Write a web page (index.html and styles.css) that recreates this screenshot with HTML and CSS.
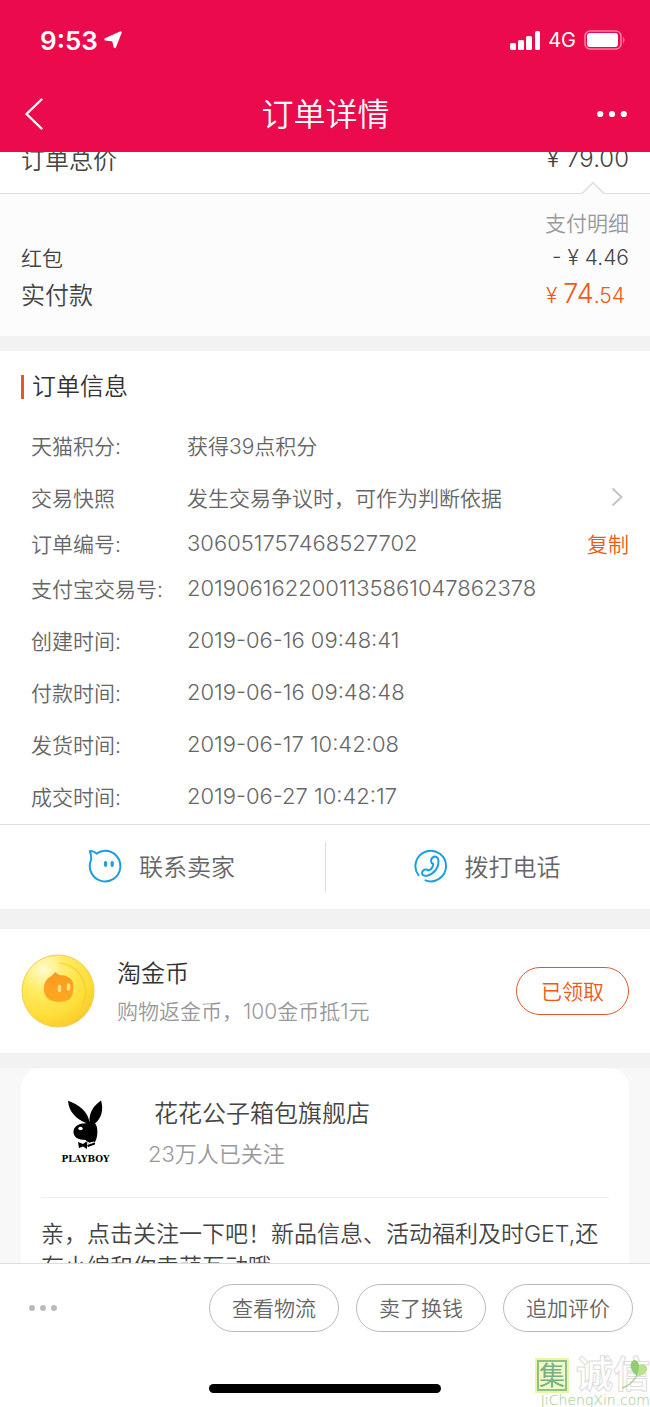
FILE: index.html
```html
<!DOCTYPE html>
<html lang="zh-CN">
<head>
<meta charset="utf-8">
<meta name="viewport" content="width=device-width, initial-scale=1">
<title>订单详情</title>
<link rel="stylesheet" href="styles.css">
</head>
<body>
<div class="app">
  <header class="header">
    <div class="status">
      <div class="status-group">
        <span class="clock">9:53</span>
        <svg class="locate" width="18" height="18" viewBox="0 0 18 18"><path d="M16.500 1.500 10.800 16 9.300 9.200 1.500 8.300Z" fill="#fff" stroke="#fff" stroke-width="2.400" stroke-linejoin="round"/></svg>
      </div>
      <div class="status-group">
        <svg width="30" height="19" viewBox="0 0 30 19" fill="#fff"><rect x="0" y="12" width="6" height="7" rx="1.500"/><rect x="8" y="9" width="6" height="10" rx="1.500"/><rect x="16" y="5" width="6" height="14" rx="1.500"/><rect x="25" y="0" width="5" height="19" rx="1.500"/></svg>
        <span class="network">4G</span>
        <svg width="42" height="20" viewBox="0 0 42 20"><rect x="1" y="1" width="36" height="18" rx="5" fill="none" stroke="#fff" stroke-opacity=".5" stroke-width="1.500"/><rect x="3" y="3" width="31" height="14" rx="3" fill="#fff"/><path d="M39 6.500q3 3.500 0 7Z" fill="#fff" fill-opacity=".5"/></svg>
      </div>
    </div>
    <nav class="nav">
      <button class="icon-button" aria-label="返回"><svg width="20" height="32" viewBox="0 0 20 32"><path d="M17.500 1.500 2.500 16l15 14.500" fill="none" stroke="#fff" stroke-width="2.400" stroke-linecap="round" stroke-linejoin="round"/></svg></button>
      <h1 class="nav-title">订单详情</h1>
      <button class="icon-button icon-button-end" aria-label="更多"><svg width="30" height="8" viewBox="0 0 30 8" fill="#fff"><circle cx="3.200" cy="4" r="3.100"/><circle cx="15" cy="4" r="3.100"/><circle cx="26.800" cy="4" r="3.100"/></svg></button>
    </nav>
  </header>

  <main class="content">
    <section class="total">
      <span>订单总价</span>
      <span>¥ 79.00</span>
      <svg class="notch" width="24" height="13" viewBox="0 0 24 13"><path d="M0 13 1.500 12 12 1.500 22.500 12 24 13Z" fill="#fcfcfc"/><path d="M1 12.500 12 1.500l11 11" fill="none" stroke="#ddd" stroke-width="1.500"/></svg>
    </section>

    <section class="payment">
      <p class="payment-detail">支付明细</p>
      <div class="payment-row"><span>红包</span><span>- ¥ 4.46</span></div>
      <div class="payment-row payment-paid"><span>实付款</span><span class="paid"><span class="paid-small">¥ </span>74<span class="paid-small">.54</span></span></div>
    </section>

    <section class="order">
      <h2 class="order-title">订单信息</h2>
      <dl class="info">
        <div class="info-row"><dt>天猫积分:</dt><dd>获得39点积分</dd></div>
        <div class="info-row"><dt>交易快照</dt><dd>发生交易争议时，可作为判断依据</dd>
          <svg class="chevron" width="13" height="20" viewBox="0 0 13 20"><path d="m1.500 1.500 9 8.500-9 8.500" fill="none" stroke="#c4c4c4" stroke-width="2"/></svg></div>
        <div class="info-row info-row-short"><dt>订单编号:</dt><dd class="digits">306051757468527702</dd><button class="copy">复制</button></div>
        <div class="info-row"><dt>支付宝交易号:</dt><dd class="digits">2019061622001135861047862378</dd></div>
        <div class="info-row"><dt>创建时间:</dt><dd class="digits">2019-06-16 09:48:41</dd></div>
        <div class="info-row"><dt>付款时间:</dt><dd class="digits">2019-06-16 09:48:48</dd></div>
        <div class="info-row"><dt>发货时间:</dt><dd class="digits">2019-06-17 10:42:08</dd></div>
        <div class="info-row"><dt>成交时间:</dt><dd class="digits">2019-06-27 10:42:17</dd></div>
      </dl>
    </section>

    <section class="contact">
      <button class="contact-button">
        <svg width="34" height="34" viewBox="0 0 34 34" fill="none" stroke="#1b9fe0" stroke-width="2" stroke-linecap="round" stroke-linejoin="round"><path d="M3.200 10.800Q3.500 5.800 1.800 2.200q3.200-.6 6.800 2.400Q12.600 1.800 17 1.800a15.300 15.300 0 1 1-14 9.300"/><path d="M17.600 13.500v2.800M24.200 13.500v2.800" stroke-width="3.200"/></svg>
        <span>联系卖家</span>
      </button>
      <button class="contact-button">
        <svg width="34" height="34" viewBox="0 0 34 34" fill="none" stroke="#1b9fe0" stroke-width="2" stroke-linecap="round" stroke-linejoin="round"><path d="M4.500 26.200A15.300 15.300 0 1 1 11.500 31.400"/><path d="M18.500 8.600c2.600-2 5.600-.7 5.900 2.600.6 7.800-4.300 13.700-11.300 15.500-3.400.6-5.900-1.400-4.800-4 1.100-2.300 4-3 5.900-1.200 3.200-1 4.800-3.500 5-6.600-2.500-.7-3-4.500-.7-6.300Z"/></svg>
        <span>拨打电话</span>
      </button>
    </section>

    <section class="coin">
      <svg class="coin-icon" width="74" height="74" viewBox="0 0 74 74">
        <defs><radialGradient id="gold" cx=".3" cy=".2" r=".9"><stop offset="0" stop-color="#fffbd0"/><stop offset=".35" stop-color="#ffec62"/><stop offset=".75" stop-color="#fddc35"/><stop offset="1" stop-color="#f8c52c"/></radialGradient>
        <linearGradient id="face" x2="0" y2="1"><stop stop-color="#f99a20"/><stop offset="1" stop-color="#ffa822"/></linearGradient></defs>
        <circle cx="37" cy="37" r="36" fill="url(#gold)" stroke="#f3cc51" stroke-width="1"/>
        <path d="M38 9A29 29 0 0 1 62 50" fill="none" stroke="#f8c331" stroke-width="1.500" opacity=".6"/>
        <path d="M31 21.500q3.500-4 4-3.500.5 2 4.500 3.300 5-.6 7.500 1.700 5.200 2.300 5.200 8.500 1 8-3.200 13.500-5 3-12 3Q23.600 47 22.800 36 22 26 31 21.500Z" fill="url(#face)"/>
        <path d="M38.500 32.500v4M47.500 31v4" stroke="#ffe078" stroke-width="3.500" stroke-linecap="round"/>
      </svg>
      <div class="coin-text">
        <h3 class="coin-title">淘金币</h3>
        <p class="coin-note">购物返金币，100金币抵1元</p>
      </div>
      <button class="pill pill-accent">已领取</button>
    </section>

    <section class="shop">
      <article class="card">
        <div class="shop-head">
          <div class="logo">
            <svg width="38" height="49" viewBox="0 0 38 49"><path d="M1 .800C11 4 21.500 12 22.500 22.500 22 13 26 6 34 .5 37 10 34 19 28 23.500 31 26 31 35 29 40q-1.500 4-9.500 3l-.7-3C11 40 6.500 37 6.500 32c0-6 6-9 13-8.700C9 19 2 12 1 .800Z" fill="#000"/><ellipse cx="13.500" cy="28.500" rx="2.200" ry="1.700" fill="#fff"/><path d="m11 42 5 2 4-3v8l-4-2.500-4 1.500ZM20 45l8-2.500v2l-7 2.500Z" fill="#000"/><path d="M19 41.500q3 3 8 .5" fill="none" stroke="#fff"/></svg>
            <span class="logo-name">PLAYBOY</span>
          </div>
          <div class="shop-text">
            <h3 class="shop-name">花花公子箱包旗舰店</h3>
            <p class="followers">23万人已关注</p>
          </div>
        </div>
        <p class="message">亲，点击关注一下吧！新品信息、活动福利及时GET,还有小编和你卖萌互动哦</p>
      </article>
    </section>
  </main>

  <footer class="footer">
    <div class="actions">
      <button class="icon-button more" aria-label="更多操作"><svg width="30" height="8" viewBox="0 0 30 8" fill="#bbb"><circle cx="4" cy="4" r="3"/><circle cx="15" cy="4" r="3"/><circle cx="26" cy="4" r="3"/></svg></button>
      <button class="pill">查看物流</button>
      <button class="pill">卖了换钱</button>
      <button class="pill">追加评价</button>
    </div>
    <div class="home-bar"></div>
    <div class="brand">
      <div class="brand-top">
        <span class="seal">集</span>
        <span class="brand-name">诚信</span>
        <svg class="leaf" width="30" height="32" viewBox="0 0 30 32"><path d="M2 30Q12 27 17 17" fill="none" stroke="#a9d58d" stroke-width="1.500"/><path d="M17 18C9 12 9 4 14 2q4 0 5 5 6-2 8 3 0 7-10 8Z" fill="#92cc73"/><path d="M17 18Q19 11 19 7q6-2 8 3 0 7-10 8Z" fill="#bce18e"/></svg>
      </div>
      <span class="brand-url">JiChengXin.com</span>
    </div>
  </footer>
</div>
</body>
</html>
```
FILE: styles.css
```css
* {
  box-sizing: border-box;
}

body,
h1,
h2,
h3,
p,
dl,
dd {
  margin: 0;
  font-weight: 350;
}

body {
  color: #444;
  font-family: Inter, "Noto Sans CJK SC", sans-serif;
  font-size: 21px;
}

button {
  padding: 0;
  border: 0;
  background: none;
  color: inherit;
  font: inherit;
}

svg {
  display: block;
  flex: none;
}

.app {
  display: flex;
  flex-direction: column;
  height: 100vh;
  background: #fff;
}

.header {
  position: relative;
  z-index: 1;
  flex: none;
  background: #eb0a4b;
  color: #fff;
}

.status {
  display: flex;
  align-items: center;
  justify-content: space-between;
  height: 76px;
  padding: 4px 24px 0 40px;
}

.status-group {
  display: flex;
  align-items: center;
  gap: 8px;
}

.clock {
  font-size: 26px;
  font-weight: 600;
}

.locate {
  margin-left: -2px;
}

.network {
  font-size: 20px;
  font-weight: 400;
}

.nav {
  display: grid;
  grid-template-columns: 1fr auto 1fr;
  align-items: center;
  height: 76px;
  padding: 0 23px 0 24px;
}

.nav-title {
  padding-top: 2px;
  font-size: 32px;
  line-height: 40px;
}

.icon-button-end {
  justify-self: end;
}

.content {
  flex: 1;
  min-height: 0;
  overflow: hidden;
}

.total {
  position: relative;
  display: flex;
  align-items: center;
  justify-content: space-between;
  height: 72px;
  margin-top: -30px;
  padding: 2px 21px 0;
  border-bottom: 1px solid #ddd;
  font-size: 24px;
}

.notch {
  position: absolute;
  right: 45px;
  bottom: -1px;
}

.payment {
  height: 142px;
  padding: 15px 21px 0;
  background: #fcfcfc;
}

.payment-detail {
  color: #999;
  line-height: 30px;
  text-align: right;
}

.payment-row {
  display: flex;
  align-items: center;
  justify-content: space-between;
  height: 36px;
}

.payment-paid {
  padding-right: 4px;
  font-size: 24px;
}

.paid {
  color: #ee5a14;
  font-size: 27px;
}

.paid-small {
  font-size: 21px;
}

.order {
  padding: 24px 21px 0;
  border-top: 15px solid #f2f2f2;
}

.order-title {
  padding-left: 8px;
  border-left: 3px solid #e0592a;
  color: #333;
  font-size: 24px;
  line-height: 24px;
}

.info {
  padding: 20px 0 2px 10px;
  color: #666;
}

.info-row {
  display: flex;
  align-items: center;
  height: 52px;
}

.info-row-short {
  height: 39px;
}

.info-row dt {
  flex: none;
  width: 156px;
}

.info-row dd {
  flex: 1;
}

.info-row .digits {
  font-size: 22px;
}

.chevron {
  margin-right: 5px;
}

.copy {
  color: #ee5a14;
}

.contact {
  display: grid;
  grid-template-columns: 1fr 1fr;
  height: 105px;
  padding: 17px 0;
  border-top: 1px solid #ddd;
  border-bottom: 20px solid #f2f2f2;
}

.contact-button {
  display: flex;
  align-items: center;
  justify-content: center;
  gap: 17px;
  padding: 0 2px 3px 0;
  color: #666;
  font-size: 24px;
}

.contact-button + .contact-button {
  border-left: 1px solid #ddd;
}

.coin {
  display: flex;
  align-items: center;
  gap: 22px;
  height: 139px;
  padding: 0 21px;
  border-bottom: 15px solid #f2f2f2;
}

.coin-text {
  flex: 1;
  padding-top: 3px;
}

.coin-title {
  color: #333;
  font-size: 24px;
  line-height: 38px;
}

.coin-note {
  color: #999;
  line-height: 38px;
}

.pill {
  width: 130px;
  height: 48px;
  padding-bottom: 2px;
  border: 1px solid #bbb;
  border-radius: 24px;
  background: #fff;
  color: #666;
}

.pill-accent {
  width: 113px;
  border-color: #e0592a;
  color: #ee5a14;
}

.shop {
  padding: 0 21px;
  background: #f8f8f8;
}

.card {
  padding: 0 20px 40px;
  border-radius: 20px 20px 0 0;
  background: #fff;
}

.shop-head {
  display: flex;
  align-items: center;
  gap: 38px;
  height: 130px;
  padding-left: 20px;
  border-bottom: 1px solid #eee;
}

.logo {
  display: flex;
  flex-direction: column;
  align-items: center;
  gap: 4px;
  width: 49px;
}

.logo-name {
  color: #000;
  font-family: "DejaVu Serif", serif;
  font-size: 9px;
  font-weight: 700;
  line-height: 12px;
}

.shop-text {
  padding-top: 2px;
}

.shop-name {
  padding-left: 6px;
  font-size: 24px;
  line-height: 40px;
}

.followers {
  color: #999;
  font-size: 22px;
  line-height: 40px;
}

.message {
  padding-top: 20px;
  font-size: 23px;
  line-height: 33px;
}

.footer {
  position: relative;
  flex: none;
  height: 144px;
  border-top: 1px solid #ddd;
  background: #fff;
}

.actions {
  display: flex;
  align-items: center;
  gap: 17px;
  padding: 20px 17px 0 28px;
}

.more {
  margin-right: auto;
}

.home-bar {
  width: 232px;
  height: 9px;
  margin: 52px auto 0;
  border-radius: 5px;
  background: #000;
}

.brand {
  position: absolute;
  right: 0;
  bottom: 0;
  display: flex;
  flex-direction: column;
  align-items: flex-end;
}

.brand-top {
  position: relative;
  display: flex;
  align-items: center;
  gap: 9px;
}

.seal {
  border: 2px solid #8dbf86;
  outline: 2px solid #e6f7a8;
  background: #f0f9c8;
  color: #79ae85;
  font-size: 26px;
  font-weight: 400;
  line-height: 27px;
}

.brand-name {
  color: #fff;
  font-size: 37px;
  font-weight: 700;
  line-height: 36px;
  -webkit-text-stroke: 1px #ddd;
}

.leaf {
  position: absolute;
  right: 0;
  top: 1px;
}

.brand-url {
  color: #94c788;
  font-family: "DejaVu Sans", sans-serif;
  font-size: 14px;
  line-height: 14px;
}
```
